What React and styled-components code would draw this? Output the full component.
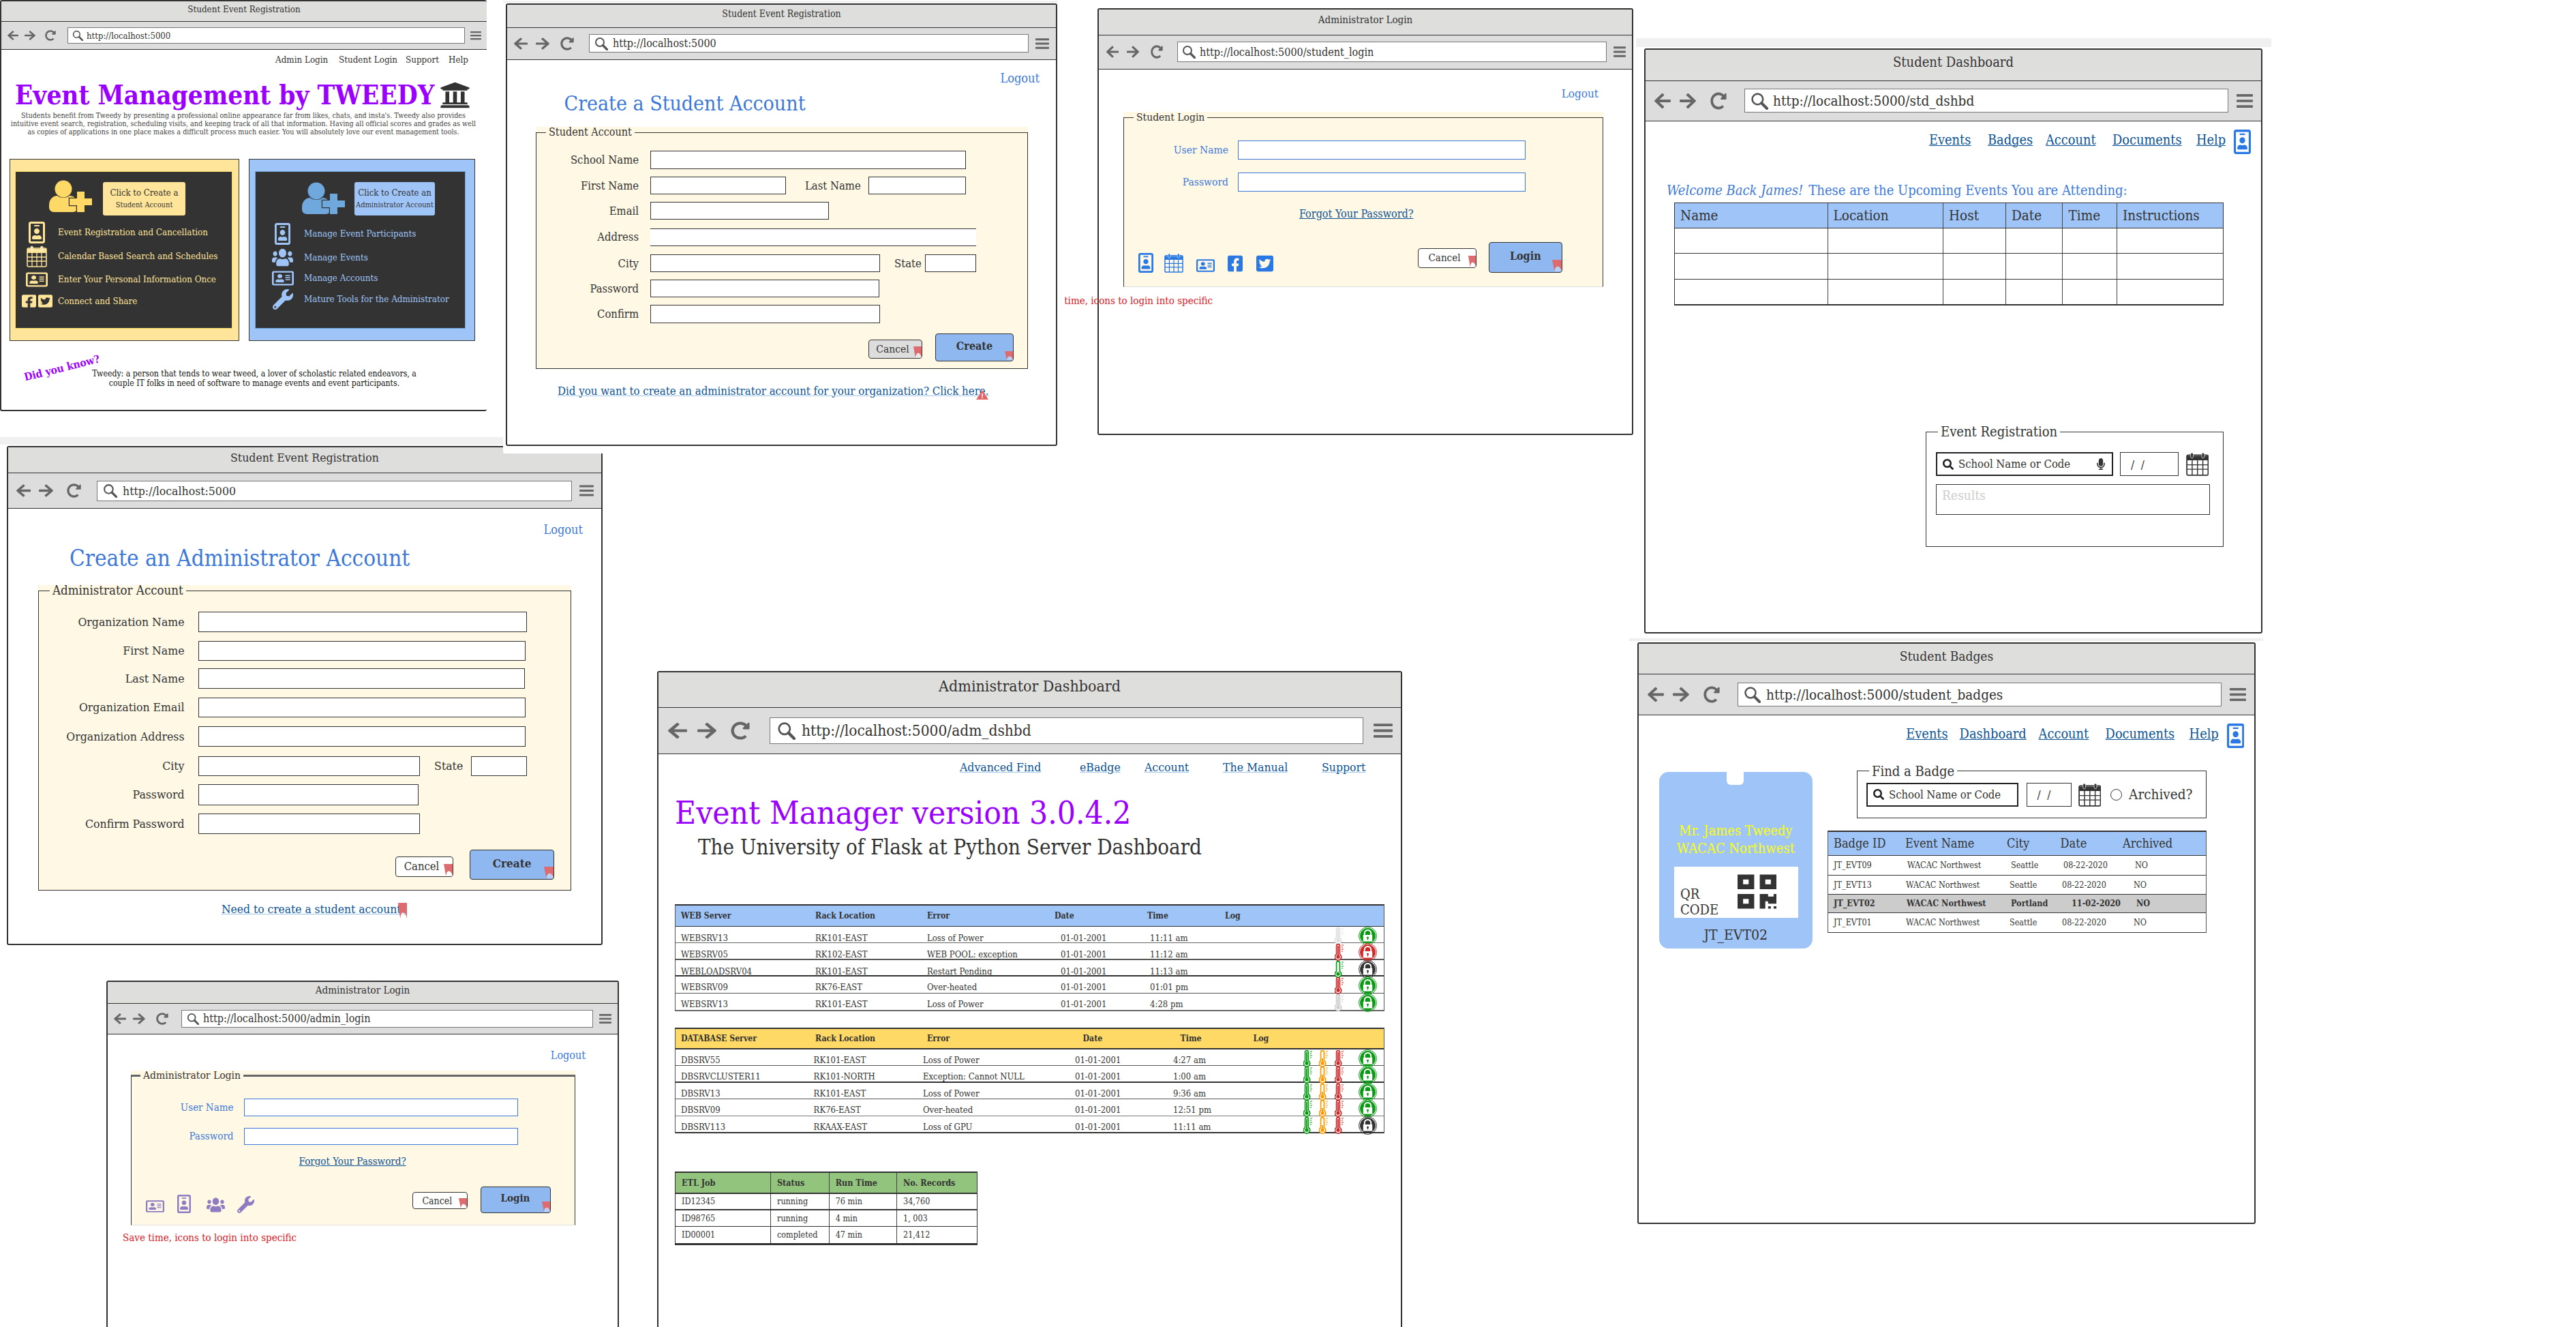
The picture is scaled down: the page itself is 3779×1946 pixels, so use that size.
import React from "react";
import styled, { createGlobalStyle } from "styled-components";
import {
  FaArrowLeft,
  FaArrowRight,
  FaRedoAlt,
  FaBars,
  FaSearch,
  FaUniversity,
  FaRegIdBadge,
  FaRegAddressCard,
  FaFacebookSquare,
  FaTwitterSquare,
  FaUsers,
  FaWrench,
  FaMicrophone,
  FaQrcode,
} from "react-icons/fa";

const SLAB = `"DejaVu Serif Condensed", "DejaVu Serif", "Liberation Serif", serif`;

const BLUE = "#3c78d8";
const LINK = "#0b5394";
const PURPLE = "#9900ff";
const SKY = "#9fc5f8";
const CREAM = "#fff8e5";

const Global = createGlobalStyle`
  html, body { margin: 0; padding: 0; background: #fff; overflow: hidden; }
  * { box-sizing: border-box; }
`;

const Canvas = styled.main`
  position: relative;
  width: 3779px;
  height: 1946px;
  overflow: hidden;
  background: #fff;
  font-family: ${SLAB};
  color: #333;
`;

const Strip = styled.div`
  position: absolute;
  left: ${(p) => p.$x}px;
  top: ${(p) => p.$y}px;
  width: ${(p) => p.$w}px;
  height: ${(p) => p.$h}px;
  background: #f0f0f0;
`;

const Win = styled.section`
  position: absolute;
  left: ${(p) => p.$x}px;
  top: ${(p) => p.$y}px;
  width: ${(p) => p.$w}px;
  height: ${(p) => p.$h}px;
  display: flex;
  flex-direction: column;
  border: 2px solid #333;
  border-right: ${(p) => (p.$open ? "none" : "2px solid #333")};
  border-radius: 3px;
  background: #fff;
  overflow: hidden;
  box-shadow: ${(p) => p.$halo || "none"};
`;

const TitleBar = styled.header`
  flex: none;
  height: ${(p) => p.$h}px;
  display: flex;
  align-items: center;
  justify-content: center;
  background: #dededc;
  border-bottom: 1px solid #333;
  font-size: ${(p) => p.$fs}px;
  color: #333;
  padding-bottom: ${(p) => p.$h * 0.2}px;
`;

const Toolbar = styled.div`
  flex: none;
  height: ${(p) => p.$h}px;
  display: flex;
  align-items: center;
  background: #ddd;
  border-bottom: 1.5px solid #333;
`;

const NavIcons = styled.div`
  flex: none;
  width: ${(p) => p.$w}px;
  display: flex;
  align-items: center;
  padding-left: ${(p) => p.$pad}px;
`;

const Glyph = styled.span`
  flex: none;
  display: block;
  width: ${(p) => p.$w}px;
  height: ${(p) => p.$h}px;
  margin-left: ${(p) => p.$ml || 0}px;
  margin-top: ${(p) => p.$mt || 0}px;
  color: ${(p) => p.$c || "#666"};
  & > svg {
    display: block;
    width: 100%;
    height: 100%;
  }
`;

const UrlBox = styled.div`
  flex: none;
  width: ${(p) => p.$w}px;
  height: ${(p) => p.$h}px;
  display: flex;
  align-items: center;
  background: #fff;
  border: 1.5px solid #777;
  font-size: ${(p) => p.$fs}px;
  color: #333;
  white-space: nowrap;
`;

const UrlIcon = styled.span`
  flex: none;
  width: ${(p) => p.$w}px;
  display: flex;
  justify-content: center;
  color: #555;
`;

const Hamburger = styled.div`
  flex: none;
  margin-left: ${(p) => p.$ml}px;
`;

const Body = styled.div`
  flex: 1;
  min-height: 0;
  padding-top: ${(p) => p.$pt || 0}px;
`;

const NavRow = styled.nav`
  display: flex;
  align-items: center;
  justify-content: flex-end;
  padding-right: ${(p) => p.$pr}px;
`;

const NavLink = styled.a`
  flex: none;
  width: ${(p) => p.$w}px;
  margin-left: ${(p) => p.$ml || 0}px;
  margin-bottom: ${(p) => p.$mb || 0}px;
  font-size: ${(p) => p.$fs}px;
  line-height: 20px;
  white-space: nowrap;
  color: ${(p) => p.$c || LINK};
  text-decoration: ${(p) => (p.$plain ? "none" : "underline")};
  text-decoration-color: ${(p) => p.$under || "currentColor"};
  text-decoration-thickness: 1px;
`;

const Logout = styled.a`
  display: block;
  text-align: right;
  padding-right: ${(p) => p.$pr}px;
  font-size: ${(p) => p.$fs}px;
  line-height: 18px;
  color: ${BLUE};
`;

const Heading = styled.h1`
  margin: ${(p) => p.$mt}px 0 0 ${(p) => p.$ml}px;
  font-size: ${(p) => p.$fs}px;
  line-height: ${(p) => p.$lh}px;
  font-weight: 400;
  color: ${BLUE};
  white-space: nowrap;
`;

const Cream = styled.div`
  margin: ${(p) => p.$mt}px ${(p) => p.$mr}px 0 ${(p) => p.$ml}px;
  background: ${CREAM};
`;

const Field = styled.fieldset`
  margin: 0;
  padding: 0 0 ${(p) => p.$pb || 0}px 0;
  min-width: 0;
  border: 1px solid #333;
  border-top: ${(p) => p.$top || "1.5px solid #333"};
  border-bottom: ${(p) => p.$bottom || "1px solid #333"};
`;

const Legend = styled.legend`
  margin-left: ${(p) => p.$ml}px;
  padding: 0 4px;
  font-size: ${(p) => p.$fs}px;
  line-height: ${(p) => p.$lh}px;
  color: #333;
`;

const FormRow = styled.div`
  display: flex;
  align-items: ${(p) => p.$align || "center"};
  margin-top: ${(p) => p.$mt}px;
`;

const Label = styled.label`
  flex: none;
  width: ${(p) => p.$w}px;
  margin-left: ${(p) => p.$ml || 0}px;
  margin-right: ${(p) => p.$gap}px;
  text-align: right;
  white-space: nowrap;
  font-size: ${(p) => p.$fs}px;
  color: ${(p) => p.$c || "#333"};
`;

const Input = styled.input`
  flex: none;
  display: block;
  width: ${(p) => p.$w}px;
  height: ${(p) => p.$h}px;
  padding: 0;
  background: #fff;
  border: ${(p) => p.$b || "1px solid #333"};
  border-left: ${(p) => p.$sides};
  border-right: ${(p) => p.$sides};
  border-radius: 0;
`;

const Buttons = styled.div`
  display: flex;
  flex: none;
  align-items: flex-start;
  margin-left: auto;
  padding-right: ${(p) => p.$pr}px;
  gap: ${(p) => p.$gap}px;
`;

const Btn = styled.button`
  position: relative;
  flex: none;
  width: ${(p) => p.$w}px;
  height: ${(p) => p.$h}px;
  margin-top: ${(p) => p.$mt || 0}px;
  padding: 0 ${(p) => p.$pr || 0}px ${(p) => p.$pb || 0}px 0;
  border: 1.5px solid #333;
  border-radius: 4px;
  background: ${(p) => p.$bg};
  font-family: ${SLAB};
  font-size: ${(p) => p.$fs}px;
  font-weight: ${(p) => (p.$bold ? 700 : 400)};
  color: #333;
`;

const Marker = styled.svg`
  position: absolute;
  right: ${(p) => p.$r || 0}px;
  bottom: ${(p) => p.$b || 0}px;
  width: ${(p) => p.$w}px;
  height: ${(p) => p.$h}px;
`;

const FootLink = styled.a`
  position: relative;
  display: inline-block;
  margin: ${(p) => p.$mt}px 0 0 ${(p) => p.$ml}px;
  font-size: ${(p) => p.$fs}px;
  line-height: 20px;
  color: ${LINK};
  text-decoration: underline;
  text-decoration-color: #9fc5e8;
  white-space: nowrap;
`;

const Forgot = styled.a`
  display: block;
  margin: ${(p) => p.$mt}px 0 0 ${(p) => p.$ml}px;
  font-size: ${(p) => p.$fs}px;
  line-height: 18px;
  color: ${LINK};
  text-decoration: underline;
`;

const RedNote = styled.p`
  margin: ${(p) => p.$mt}px 0 0 ${(p) => p.$ml}px;
  font-size: 15px;
  line-height: 18px;
  color: #d5222a;
  white-space: nowrap;
`;

const LooseNote = styled(RedNote)`
  position: absolute;
  left: 1524px;
  top: 432px;
  margin: 0;
`;

const IconRow = styled.div`
  display: flex;
  align-items: flex-end;
  padding-left: ${(p) => p.$pl}px;
  align-self: ${(p) => p.$self || "flex-end"};
`;

/* home page */
const HomeTitleRow = styled.div`
  display: flex;
  align-items: center;
  height: 46px;
  margin: 18.5px 0 0 20px;
`;

const HomeTitle = styled.h1`
  flex: none;
  width: 623px;
  margin: 0;
  font-size: ${(p) => p.$fs}px;
  line-height: 46px;
  font-weight: 700;
  color: ${PURPLE};
  white-space: nowrap;
`;

const Blurb = styled.p`
  width: 700px;
  margin: 1px 0 0 5px;
  font-size: 10.7px;
  line-height: 12px;
  text-align: center;
  color: #444;
  white-space: nowrap;
`;

const PanelRow = styled.div`
  display: flex;
  gap: 13.5px;
  margin: 33px 0 0 11.5px;
`;

const Panel = styled.div`
  flex: none;
  width: ${(p) => p.$w}px;
  height: 267px;
  padding: 17px 0 0 ${(p) => p.$pl}px;
  background: ${(p) => p.$bg};
  border: 1px solid #333;
`;

const DarkBox = styled.div`
  width: ${(p) => p.$w}px;
  height: 231px;
  background: #333;
  border: 1px solid ${(p) => p.$edge};
`;

const PanelHead = styled.div`
  display: flex;
  align-items: flex-start;
  padding: ${(p) => p.$pt}px 0 0 ${(p) => p.$pl}px;
  gap: ${(p) => p.$gap}px;
`;

const CallButton = styled.div`
  flex: none;
  width: ${(p) => p.$w}px;
  height: 49px;
  margin-top: ${(p) => p.$mt || 0}px;
  display: flex;
  flex-direction: column;
  align-items: center;
  justify-content: center;
  gap: 5px;
  background: ${(p) => p.$bg};
  border-radius: 3px;
  color: #333;
  white-space: nowrap;
`;

const CallBig = styled.span`
  font-size: 13px;
  line-height: 14px;
`;

const CallSmall = styled.span`
  font-size: 11px;
  line-height: 12px;
`;

const Perk = styled.div`
  display: flex;
  align-items: center;
  height: ${(p) => p.$h}px;
  margin-top: ${(p) => p.$mt}px;
  padding-left: ${(p) => p.$pl || 0}px;
  color: ${(p) => p.$c};
  font-size: 13.3px;
  white-space: nowrap;
`;

const PerkIcon = styled.div`
  flex: none;
  display: flex;
  justify-content: center;
  gap: 3px;
  width: ${(p) => p.$w}px;
  margin-right: ${(p) => p.$gap || 0}px;
`;

const Footnote = styled.div`
  position: relative;
  margin-top: 41px;
`;

const DidYou = styled.span`
  position: absolute;
  left: 32px;
  top: -11px;
  font-size: 15.5px;
  line-height: 20px;
  font-weight: 700;
  color: ${PURPLE};
  transform: rotate(-14deg);
  white-space: nowrap;
`;

const Definition = styled.p`
  width: 490px;
  margin: 0 0 0 126px;
  font-size: 12.2px;
  line-height: 14px;
  text-align: center;
  color: #111;
  white-space: nowrap;
`;

/* tables */
const Table = styled.div`
  width: ${(p) => p.$w}px;
  margin: ${(p) => p.$mt}px 0 0 ${(p) => p.$ml}px;
  border-left: 1px solid #555;
  border-right: 1px solid #555;
  border-top: 2px solid #333;
  font-size: ${(p) => p.$fs}px;
`;

const GridRow = styled.div`
  display: grid;
  grid-template-columns: ${(p) => p.$cols};
  align-items: center;
  height: ${(p) => p.$h}px;
  padding-left: ${(p) => p.$pl || 0}px;
  background: ${(p) => p.$bg || "#fff"};
  border-bottom: ${(p) => p.$bw || 1}px solid ${(p) => p.$bc || "#444"};
  font-weight: ${(p) => (p.$bold ? 700 : 400)};
  font-size: ${(p) => p.$fs || "inherit"};
  white-space: nowrap;
  & > span {
    padding-top: ${(p) => p.$lift || 0}px;
  }
`;

const Status = styled.div`
  display: flex;
  align-items: center;
  justify-content: flex-end;
  height: 100%;
  padding-right: 10px;
  gap: 8px;
`;

const LockSlot = styled.span`
  flex: none;
  width: 27px;
  height: 27px;
  margin-left: 12px;
`;

const Boxed = styled.div`
  display: grid;
  grid-template-columns: ${(p) => p.$cols};
  height: ${(p) => p.$h}px;
  background: ${(p) => p.$bg || "#fff"};
  border-bottom: ${(p) => p.$bw || 1}px solid #333;
  white-space: nowrap;
`;

const BoxedCell = styled.div`
  display: flex;
  align-items: center;
  padding-left: ${(p) => p.$pl}px;
  border-right: ${(p) => (p.$last ? "none" : "1px solid #444")};
  font-size: ${(p) => p.$fs}px;
  font-weight: ${(p) => (p.$bold ? 700 : 400)};
`;

const BoxedTable = styled.div`
  width: ${(p) => p.$w}px;
  margin: ${(p) => p.$mt}px 0 0 ${(p) => p.$ml}px;
  border: 1px solid #333;
  border-top-width: ${(p) => p.$tw || 1}px;
`;

/* dashboards */
const Welcome = styled.p`
  margin: 42px 0 0 31px;
  font-size: 20px;
  line-height: 22px;
  color: ${BLUE};
  white-space: nowrap;
  & > em {
    margin-right: 8px;
  }
`;

const PlainField = styled.fieldset`
  width: ${(p) => p.$w}px;
  height: ${(p) => p.$h}px;
  margin: ${(p) => p.$mt}px 0 0 ${(p) => p.$ml}px;
  padding: 0;
  min-width: 0;
  border: 1px solid #333;
`;

const SearchBox = styled.div`
  flex: none;
  display: flex;
  align-items: center;
  width: ${(p) => p.$w}px;
  height: 35px;
  margin-left: ${(p) => p.$ml || 0}px;
  padding-left: 8px;
  background: #fff;
  border: 2px solid #222;
  font-size: 16.5px;
  color: #333;
  white-space: nowrap;
`;

const SearchText = styled.span`
  flex: 1;
  margin-left: 7px;
`;

const DateBox = styled.div`
  flex: none;
  width: ${(p) => p.$w}px;
  height: 35px;
  margin-left: ${(p) => p.$ml}px;
  display: flex;
  align-items: center;
  padding-left: 15px;
  border: 1px solid #333;
  font-size: 17px;
  white-space: pre;
`;

const Results = styled.div`
  width: 402px;
  height: 45px;
  margin: 12px 0 0 14px;
  padding: 5px 8px;
  border: 1.5px solid #333;
  font-size: 19px;
  line-height: 20px;
  color: #ccc;
`;

const AdminHeading = styled.h1`
  margin: 29px 0 0 24px;
  font-size: 47.5px;
  line-height: 56px;
  font-weight: 400;
  color: ${PURPLE};
  white-space: nowrap;
`;

const AdminSub = styled.h2`
  margin: 3px 0 0 58px;
  font-size: 31px;
  line-height: 38px;
  font-weight: 400;
  color: #333;
  white-space: nowrap;
`;

/* badges */
const BadgeMain = styled.div`
  display: flex;
  align-items: flex-start;
  gap: 22.5px;
  margin: 35px 0 0 30px;
`;

const BadgeCard = styled.div`
  position: relative;
  flex: none;
  width: 224.5px;
  height: 259px;
  padding-top: 73px;
  background: ${SKY};
  border-radius: 14px;
  text-align: center;
  overflow: hidden;
`;

const BadgeHole = styled.span`
  position: absolute;
  left: 99px;
  top: -6px;
  width: 25px;
  height: 25px;
  background: #fff;
  border-radius: 6px;
`;

const BadgeName = styled.div`
  font-size: 20px;
  line-height: 26px;
  color: #ffff00;
  white-space: nowrap;
`;

const QrBox = styled.div`
  display: flex;
  align-items: flex-start;
  width: 182px;
  height: 75px;
  margin: 14px 0 0 22px;
  padding: 8px 32px 0 9px;
  background: #fff;
  text-align: left;
  color: #333;
`;

const QrText = styled.div`
  flex: 1;
  padding-top: 21px;
  font-size: 20px;
  line-height: 23px;
`;

const BadgeId = styled.div`
  margin-top: 13px;
  font-size: 21px;
  line-height: 24px;
  color: #333;
`;

const BadgeSide = styled.div`
  flex: none;
  width: 556px;
  margin-top: -12px;
`;

const FindRow = styled.div`
  display: flex;
  align-items: center;
  margin-top: 6px;
  padding-left: 13px;
`;

const Radio = styled.span`
  flex: none;
  width: 17px;
  height: 17px;
  margin: 0 10px 0 14px;
  border: 1.5px solid #333;
  border-radius: 50%;
`;

const Archived = styled.span`
  font-size: 20.5px;
  white-space: nowrap;
`;

/* drawings */
const MagGlass = ({ size }) => (
  <svg width={size} height={size} viewBox="0 0 20 20" fill="none">
    <circle cx="8" cy="8" r="6" stroke="currentColor" strokeWidth="2" />
    <path d="M12.5 12.5 L18.5 18.5" stroke="currentColor" strokeWidth="3.2" strokeLinecap="round" />
  </svg>
);

const UserPlus = ({ color }) => (
  <svg viewBox="0 0 63 47" preserveAspectRatio="none">
    <circle cx="21" cy="13" r="12.5" fill={color} />
    <path d="M0 37 C0 27 7 23 12 23 C16 27 26 27 30 23 C36 23 42 27 42 37 V40 C42 44 39 47 35 47 H7 C3 47 0 44 0 40 Z" fill={color} />
    <path d="M41 17 H52 V27 H63 V37 H52 V47 H41 V37 H30 V27 H41 Z" fill={color} stroke="#333" strokeWidth="2.5" paintOrder="stroke" />
  </svg>
);

const Calendar = () => (
  <svg viewBox="0 0 30 32" preserveAspectRatio="none" fill="none" stroke="currentColor">
    <rect x="1" y="4" width="28" height="27" rx="2" strokeWidth="1.6" />
    <path d="M1 5 H29 V11 H1 Z" fill="currentColor" stroke="none" />
    <path d="M1 17 H29 M1 23 H29 M8 11 V31 M15 11 V31 M22 11 V31" strokeWidth="1.3" />
    <rect x="6" y="1" width="3.4" height="7" rx="1.7" fill="currentColor" stroke="#fff" strokeWidth="0.6" />
    <rect x="20.6" y="1" width="3.4" height="7" rx="1.7" fill="currentColor" stroke="#fff" strokeWidth="0.6" />
  </svg>
);

const Thermo = ({ color, level }) => (
  <svg width="15" height="25" viewBox="0 0 15 25" fill="none">
    <path d="M2.6 3 a2.4 2.4 0 0 1 4.8 0 V15.4 a4.7 4.7 0 1 1 -4.8 0 Z" stroke={color} strokeWidth="1.7" fill="#fff" />
    <circle cx="5" cy="19.2" r="2.6" fill={color} />
    <rect x="4.1" y={level} width="1.8" height={19 - level} fill={color} />
    <path d="M9.8 2 H13 M9.8 5 H12 M9.8 8 H13 M9.8 11 H12" stroke={color} strokeWidth="1.2" />
  </svg>
);

const Lock = ({ color }) => (
  <svg viewBox="0 0 27 27" width="27" height="27">
    <circle cx="13.5" cy="13.5" r="13" fill="none" stroke={color} strokeWidth="1" />
    <circle cx="13.5" cy="13.5" r="11.4" fill={color} />
    <path d="M8.8 12 V9.6 a4.7 4.7 0 0 1 9.4 0 V12" fill="none" stroke="#fff" strokeWidth="2" />
    <rect x="6.8" y="12" width="13.4" height="9.6" fill="#fff" />
    <circle cx="13.5" cy="16" r="1.5" fill={color} />
    <rect x="12.8" y="16" width="1.4" height="3.4" fill={color} />
  </svg>
);

const Ribbon = (props) => (
  <Marker {...props} viewBox="0 0 12 16" preserveAspectRatio="none">
    <path d="M0 0 H12 V16 C11 10 7 8 5 10 C4 11 3 14 3 16 Z" fill="#dd6b6f" />
    <path d="M3 16 C3 14 4 11 5 10 C7 8 11 10 12 16 Z" fill="#ffffff" opacity="0.35" />
  </Marker>
);

const WarnTri = (props) => (
  <Marker {...props} viewBox="0 0 18 14" preserveAspectRatio="none">
    <path d="M9 0 L18 14 H0 Z" fill="#e06666" />
    <rect x="8.2" y="5" width="1.6" height="4.6" fill="#fff" />
    <rect x="8.2" y="10.6" width="1.6" height="1.6" fill="#fff" />
  </Marker>
);

const Browser = ({ cfg, title, url, children, open, halo }) => (
  <Win $x={cfg.x} $y={cfg.y} $w={cfg.w} $h={cfg.h} $open={open} $halo={halo}>
    <TitleBar $h={cfg.tH - 2} $fs={cfg.tFs}>
      {title}
    </TitleBar>
    <Toolbar $h={cfg.bH}>
      <NavIcons $w={cfg.uL - 2} $pad={cfg.i0 - 2}>
        <Glyph $w={cfg.iW} $h={cfg.iH}>
          <FaArrowLeft preserveAspectRatio="none" />
        </Glyph>
        <Glyph $w={cfg.iW} $h={cfg.iH} $ml={cfg.i1 - cfg.i0 - cfg.iW}>
          <FaArrowRight preserveAspectRatio="none" />
        </Glyph>
        <Glyph $w={cfg.iW} $h={cfg.iH} $ml={cfg.i2 - cfg.i1 - cfg.iW}>
          <FaRedoAlt preserveAspectRatio="none" />
        </Glyph>
      </NavIcons>
      <UrlBox $w={cfg.uR - cfg.uL} $h={cfg.uH} $fs={cfg.uFs}>
        <UrlIcon $w={cfg.uPad}>
          <MagGlass size={cfg.iH} />
        </UrlIcon>
        {url}
      </UrlBox>
      <Hamburger $ml={cfg.hGap}>
        <Glyph $w={cfg.iW} $h={cfg.iH}>
          <FaBars preserveAspectRatio="none" />
        </Glyph>
      </Hamburger>
    </Toolbar>
    {children}
  </Win>
);

const HOME = { x: 0, y: 0, w: 714, h: 603, tH: 32, bH: 41, uL: 99, uR: 682, uH: 24, i0: 11, i1: 36, i2: 66, iW: 16, iH: 16, hGap: 8, uFs: 13, uPad: 27, tFs: 13.3 };
const NEW_STUDENT = { x: 742, y: 5, w: 809, h: 649, tH: 36, bH: 46.5, uL: 122, uR: 767, uH: 27, i0: 12, i1: 44, i2: 80, iW: 20, iH: 20, hGap: 10, uFs: 16, uPad: 34, tFs: 14 };
const STUDENT_LOGIN = { x: 1610, y: 12, w: 786, h: 626, tH: 40, bH: 49.5, uL: 117, uR: 746.5, uH: 30, i0: 13, i1: 43, i2: 78, iW: 18, iH: 20, hGap: 10.5, uFs: 16, uPad: 32, tFs: 15 };
const STUDENT_DASH = { x: 2412, y: 71, w: 907, h: 858, tH: 47.6, bH: 59.4, uL: 147, uR: 856.5, uH: 35, i0: 15, i1: 52, i2: 97, iW: 24, iH: 26, hGap: 12.5, uFs: 20.5, uPad: 41, tFs: 20 };
const NEW_ADMIN = { x: 10, y: 654, w: 874, h: 732, tH: 40, bH: 52, uL: 132, uR: 829, uH: 30, i0: 14, i1: 47, i2: 88, iW: 21, iH: 21, hGap: 11, uFs: 17.5, uPad: 37, tFs: 17.5 };
const ADMIN_LOGIN = { x: 156, y: 1438, w: 752, h: 560, tH: 34, bH: 44.6, uL: 110, uR: 714, uH: 26, i0: 11, i1: 39, i2: 72.6, iW: 18, iH: 18, hGap: 9, uFs: 16, uPad: 31, tFs: 15 };
const ADMIN_DASH = { x: 964, y: 984, w: 1093, h: 1010, tH: 54, bH: 67.5, uL: 165, uR: 1036, uH: 39, i0: 16, i1: 59, i2: 108, iW: 28, iH: 27, hGap: 15, uFs: 22.5, uPad: 46, tFs: 23 };
const BADGES = { x: 2402, y: 942, w: 907, h: 853, tH: 47, bH: 60.4, uL: 147, uR: 856.5, uH: 35, i0: 15, i1: 52, i2: 97, iW: 24, iH: 25, hGap: 12.5, uFs: 20.5, uPad: 41, tFs: 19 };

const WEB_ROWS = [
  { h: 24, bw: 1, bc: "#666", c: ["WEBSRV13", "RK101-EAST", "Loss of Power", "01-01-2001", "11:11 am"], t: ["#ddd", 3], lock: "#0a9a14" },
  { h: 25, bw: 2, bc: "#555", c: ["WEBSRV05", "RK102-EAST", "WEB POOL: exception", "01-01-2001", "11:12 am"], t: ["#cc2a2a", 3], lock: "#d22a2a" },
  { h: 23.5, bw: 2, bc: "#333", c: ["WEBLOADSRV04", "RK101-EAST", "Restart Pending", "01-01-2001", "11:13 am"], t: ["#0a9a14", 17], lock: "#333" },
  { h: 25, bw: 1, bc: "#555", c: ["WEBSRV09", "RK76-EAST", "Over-heated", "01-01-2001", "01:01 pm"], t: ["#cc2a2a", 3], lock: "#0a9a14" },
  { h: 26, bw: 2, bc: "#666", c: ["WEBSRV13", "RK101-EAST", "Loss of Power", "01-01-2001", "4:28 pm"], t: ["#ccc", 3], lock: "#0a9a14" },
];

const DB_ROWS = [
  { h: 24, bw: 1, bc: "#555", c: ["DBSRV55", "RK101-EAST", "Loss of Power", "01-01-2001", "4:27 am"], lock: "#0a9a14" },
  { h: 25, bw: 2, bc: "#333", c: ["DBSRVCLUSTER11", "RK101-NORTH", "Exception: Cannot NULL", "01-01-2001", "1:00 am"], lock: "#0a9a14" },
  { h: 24, bw: 1, bc: "#555", c: ["DBSRV13", "RK101-EAST", "Loss of Power", "01-01-2001", "9:36 am"], lock: "#0a9a14" },
  { h: 25, bw: 1, bc: "#777", c: ["DBSRV09", "RK76-EAST", "Over-heated", "01-01-2001", "12:51 pm"], lock: "#0a9a14" },
  { h: 25, bw: 2, bc: "#333", c: ["DBSRV113", "RKAAX-EAST", "Loss of GPU", "01-01-2001", "11:11 am"], lock: "#333" },
];

const ETL_COLS = "140px 85.7px 99.3px 1fr";
const ETL_ROWS = [
  ["ID12345", "running", "76  min", "34,760"],
  ["ID98765", "running", "4 min", "1, 003"],
  ["ID00001", "completed", "47 min", "21,412"],
];

const EVENT_COLS = "224.6px 169.4px 92px 83.5px 79.5px 1fr";

const BADGE_ROWS = [
  { h: 29, cols: "108px 152px 77px 105px 1fr", c: ["JT_EVT09", "WACAC Northwest", "Seattle", "08-22-2020", "NO"] },
  { h: 28, cols: "106px 152px 77px 105px 1fr", c: ["JT_EVT13", "WACAC Northwest", "Seattle", "08-22-2020", "NO"] },
  { h: 27, cols: "107px 153px 89px 95px 1fr", c: ["JT_EVT02", "WACAC Northwest", "Portland", "11-02-2020", "NO"], bold: true, bg: "#ccc" },
  { h: 29, cols: "106px 152px 77px 105px 1fr", c: ["JT_EVT01", "WACAC Northwest", "Seattle", "08-22-2020", "NO"] },
];

const Home = () => (
  <Browser cfg={HOME} title="Student Event Registration" url="http://localhost:5000" open>
    <Body $pt={5}>
      <NavRow $pr={30}>
        <NavLink $plain $c="#333" $fs={13.3} $w={74}>Admin Login</NavLink>
        <NavLink $plain $c="#333" $fs={13.3} $w={79} $ml={19}>Student Login</NavLink>
        <NavLink $plain $c="#333" $fs={13.3} $w={45} $ml={19}>Support</NavLink>
        <NavLink $plain $c="#333" $fs={13.3} $w={26} $ml={18}>Help</NavLink>
      </NavRow>
      <HomeTitleRow>
        <HomeTitle $fs={38.4}>Event Management by TWEEDY</HomeTitle>
        <Glyph $w={45} $h={43} $c="#333">
          <FaUniversity preserveAspectRatio="none" />
        </Glyph>
      </HomeTitleRow>
      <Blurb>
        Students benefit from Tweedy by presenting a professional online appearance far from likes, chats, and insta's. Tweedy also provides
        <br />
        intuitive event search, registration, scheduling visits, and keeping track of all that information. Having all official scores and grades as well
        <br />
        as copies of applications in one place makes a difficult process much easier. You will absolutely love our event management tools.
      </Blurb>
      <PanelRow>
        <Panel $w={337.5} $bg="#ffe599" $pl={7.5}>
          <DarkBox $w={319} $edge="#ffd966">
            <PanelHead $pt={12} $pl={49} $gap={16}>
              <Glyph $w={63} $h={47} $c="#ffd966">
                <UserPlus color="#ffd966" />
              </Glyph>
              <CallButton $w={121} $mt={3} $bg="#ffe599">
                <CallBig>Click to Create a</CallBig>
                <CallSmall>Student Account</CallSmall>
              </CallButton>
            </PanelHead>
            <Perk $h={32} $mt={9} $c="#ffe599">
              <PerkIcon $w={62}><Glyph $w={24} $h={32} $c="#ffe599"><FaRegIdBadge preserveAspectRatio="none" /></Glyph></PerkIcon>
              Event Registration and Cancellation
            </Perk>
            <Perk $h={32} $mt={3} $c="#ffe599">
              <PerkIcon $w={62}><Glyph $w={30} $h={32} $c="#ffe599"><Calendar /></Glyph></PerkIcon>
              Calendar Based Search and Schedules
            </Perk>
            <Perk $h={24} $mt={6} $c="#ffe599">
              <PerkIcon $w={62}><Glyph $w={32} $h={24} $c="#ffe599"><FaRegAddressCard preserveAspectRatio="none" /></Glyph></PerkIcon>
              Enter Your Personal Information Once
            </Perk>
            <Perk $h={21} $mt={9} $c="#ffe599">
              <PerkIcon $w={62}>
                <Glyph $w={21} $h={21} $c="#ffe599"><FaFacebookSquare preserveAspectRatio="none" /></Glyph>
                <Glyph $w={21} $h={21} $c="#ffe599"><FaTwitterSquare preserveAspectRatio="none" /></Glyph>
              </PerkIcon>
              Connect and Share
            </Perk>
          </DarkBox>
        </Panel>
        <Panel $w={332.5} $bg={SKY} $pl={8.5}>
          <DarkBox $w={309} $edge="#6fa8dc">
            <PanelHead $pt={15} $pl={68} $gap={14}>
              <Glyph $w={63} $h={47} $c="#6fa8dc">
                <UserPlus color="#6fa8dc" />
              </Glyph>
              <CallButton $w={118} $bg={SKY}>
                <CallBig>Click to Create an</CallBig>
                <CallSmall>Administrator Account</CallSmall>
              </CallButton>
            </PanelHead>
            <Perk $h={32} $mt={11} $pl={10} $c={SKY}>
              <PerkIcon $w={59} $gap={2}><Glyph $w={23} $h={32} $c={SKY}><FaRegIdBadge preserveAspectRatio="none" /></Glyph></PerkIcon>
              Manage Event Participants
            </Perk>
            <Perk $h={29} $mt={4} $pl={10} $c={SKY}>
              <PerkIcon $w={59} $gap={2}><Glyph $w={31} $h={29} $c={SKY}><FaUsers preserveAspectRatio="none" /></Glyph></PerkIcon>
              Manage Events
            </Perk>
            <Perk $h={24} $mt={4} $pl={10} $c={SKY}>
              <PerkIcon $w={59} $gap={2}><Glyph $w={32} $h={24} $c={SKY}><FaRegAddressCard preserveAspectRatio="none" /></Glyph></PerkIcon>
              Manage Accounts
            </Perk>
            <Perk $h={30} $mt={4} $pl={10} $c={SKY}>
              <PerkIcon $w={59} $gap={2}><Glyph $w={30} $h={30} $c={SKY}><FaWrench preserveAspectRatio="none" /></Glyph></PerkIcon>
              Mature Tools for the Administrator
            </Perk>
          </DarkBox>
        </Panel>
      </PanelRow>
      <Footnote>
        <DidYou>Did you know?</DidYou>
        <Definition>
          Tweedy: a person that tends to wear tweed, a lover of scholastic related endeavors, a
          <br />
          couple IT folks in need of software to manage events and event participants.
        </Definition>
      </Footnote>
    </Body>
  </Browser>
);

const NewStudent = () => (
  <Browser
    cfg={NEW_STUDENT}
    title="Student Event Registration"
    url="http://localhost:5000"
    halo="11px 11px 0 0 #fff, -4px 11px 0 0 #fff"
  >
    <Body $pt={18}>
      <Logout $pr={24} $fs={18}>Logout</Logout>
      <Heading $mt={11} $ml={83.5} $fs={30} $lh={34}>Create a Student Account</Heading>
      <Cream $mt={17.5} $mr={41} $ml={42}>
        <Field $pb={10}>
          <Legend $ml={14} $fs={16} $lh={16}>Student Account</Legend>
          <FormRow $mt={19}>
            <Label $w={150} $gap={17} $fs={16.5}>School Name</Label>
            <Input $w={463} $h={26.5} />
          </FormRow>
          <FormRow $mt={11.5}>
            <Label $w={150} $gap={17} $fs={16.5}>First Name</Label>
            <Input $w={199} $h={26} />
            <Label $w={81} $ml={28} $gap={12} $fs={16.5}>Last Name</Label>
            <Input $w={143} $h={26} />
          </FormRow>
          <FormRow $mt={11}>
            <Label $w={150} $gap={17} $fs={16.5}>Email</Label>
            <Input $w={262} $h={26} />
          </FormRow>
          <FormRow $mt={12.5}>
            <Label $w={150} $gap={17} $fs={16.5}>Address</Label>
            <Input $w={478} $h={26.5} $sides="none" />
          </FormRow>
          <FormRow $mt={12}>
            <Label $w={150} $gap={17} $fs={16.5}>City</Label>
            <Input $w={337} $h={26} />
            <Label $w={38} $ml={21} $gap={7} $fs={16.5}>State</Label>
            <Input $w={75} $h={26} />
          </FormRow>
          <FormRow $mt={11}>
            <Label $w={150} $gap={17} $fs={16.5}>Password</Label>
            <Input $w={336} $h={26} />
          </FormRow>
          <FormRow $mt={11}>
            <Label $w={150} $gap={17} $fs={16.5}>Confirm</Label>
            <Input $w={337} $h={27} />
          </FormRow>
          <FormRow $mt={15} $align="flex-start">
            <Buttons $pr={20} $gap={19}>
              <Btn $w={79} $h={28} $mt={9} $bg="#ddd" $fs={15.5} $pr={8}>
                Cancel
                <Ribbon $w={12} $h={17} />
              </Btn>
              <Btn $w={115} $h={40.5} $bg="#8fb8f0" $bold $fs={16} $pb={4}>
                Create
                <Ribbon $w={12} $h={13} $b={1} />
              </Btn>
            </Buttons>
          </FormRow>
        </Field>
      </Cream>
      <FootLink $mt={22} $ml={74} $fs={16.7}>
        Did you want to create an administrator account for your organization? Click here.
        <WarnTri $w={18} $h={14} $b={-3} />
      </FootLink>
    </Body>
  </Browser>
);

const StudentLogin = () => (
  <Browser cfg={STUDENT_LOGIN} title="Administrator Login" url="http://localhost:5000/student_login">
    <Body $pt={26.5}>
      <Logout $pr={49} $fs={17}>Logout</Logout>
      <Cream $mt={18} $mr={42} $ml={36}>
        <Field $pb={20} $top="1px solid #333" $bottom="1px solid #ddd">
          <Legend $ml={14} $fs={15.5} $lh={17}>Student Login</Legend>
          <FormRow $mt={25}>
            <Label $w={153} $gap={14} $fs={15.5} $c={BLUE}>User Name</Label>
            <Input $w={422} $h={28} $b={`1.5px solid ${BLUE}`} />
          </FormRow>
          <FormRow $mt={18.5}>
            <Label $w={153} $gap={14} $fs={15.5} $c={BLUE}>Password</Label>
            <Input $w={422} $h={28.5} $b={`1.5px solid ${BLUE}`} />
          </FormRow>
          <Forgot $mt={23.5} $ml={257} $fs={16}>Forgot Your Password?</Forgot>
          <FormRow $mt={32.5} $align="stretch">
            <IconRow $pl={21}>
              <Glyph $w={22} $h={29} $c="#2a78e4"><FaRegIdBadge preserveAspectRatio="none" /></Glyph>
              <Glyph $w={28} $h={29} $ml={16} $c="#2a78e4"><Calendar /></Glyph>
              <Glyph $w={27} $h={21} $ml={19} $mt={8} $c="#2a78e4"><FaRegAddressCard preserveAspectRatio="none" /></Glyph>
              <Glyph $w={22} $h={27} $ml={19} $c="#2a78e4"><FaFacebookSquare preserveAspectRatio="none" /></Glyph>
              <Glyph $w={25} $h={27} $ml={20} $c="#2a78e4"><FaTwitterSquare preserveAspectRatio="none" /></Glyph>
            </IconRow>
            <Buttons $pr={59} $gap={17.5}>
              <Btn $w={86} $h={28.5} $mt={9} $bg="#fff" $fs={15} $pr={8}>
                Cancel
                <Ribbon $w={11} $h={17} />
              </Btn>
              <Btn $w={108.5} $h={45} $bg="#8fb8f0" $fs={16} $bold $pb={4}>
                Login
                <Ribbon $w={14} $h={17} $b={1} />
              </Btn>
            </Buttons>
          </FormRow>
        </Field>
      </Cream>
    </Body>
  </Browser>
);

const StudentDash = () => (
  <Browser cfg={STUDENT_DASH} title="Student Dashboard" url="http://localhost:5000/std_dshbd">
    <Body $pt={12}>
      <NavRow $pr={15}>
        <NavLink $fs={19.8} $mb={4} $w={61.5}>Events</NavLink>
        <NavLink $fs={19.8} $mb={4} $w={66} $ml={24.5}>Badges</NavLink>
        <NavLink $fs={19.8} $mb={4} $w={76} $ml={19}>Account</NavLink>
        <NavLink $fs={19.8} $mb={4} $w={104} $ml={22}>Documents</NavLink>
        <NavLink $fs={19.8} $mb={4} $w={43} $ml={19}>Help</NavLink>
        <Glyph $w={25} $h={36} $ml={12} $c="#2a78e4"><FaRegIdBadge preserveAspectRatio="none" /></Glyph>
      </NavRow>
      <Welcome>
        <em>Welcome Back James!</em>These are the Upcoming Events You are Attending:
      </Welcome>
      <BoxedTable $w={806} $mt={7} $ml={42}>
        <Boxed $cols={EVENT_COLS} $h={37} $bg={SKY}>
          {["Name", "Location", "Host", "Date", "Time", "Instructions"].map((t, i) => (
            <BoxedCell key={t} $pl={8} $fs={20.5} $last={i === 5}>{t}</BoxedCell>
          ))}
        </Boxed>
        {[0, 1, 2].map((r) => (
          <Boxed key={r} $cols={EVENT_COLS} $h={37.5}>
            {[0, 1, 2, 3, 4, 5].map((c) => (
              <BoxedCell key={c} $pl={8} $last={c === 5} />
            ))}
          </Boxed>
        ))}
      </BoxedTable>
      <PlainField $w={437} $h={180} $mt={174} $ml={411}>
        <Legend $ml={17} $fs={20} $lh={22}>Event Registration</Legend>
        <FormRow $mt={19}>
          <SearchBox $w={260} $ml={14}>
            <Glyph $w={16} $h={16} $c="#222"><FaSearch /></Glyph>
            <SearchText>School Name or Code</SearchText>
            <Glyph $w={12} $h={17} $c="#333"><FaMicrophone /></Glyph>
            <Glyph $w={10} $h={1} />
          </SearchBox>
          <DateBox $w={85.5} $ml={10}>/  /</DateBox>
          <Glyph $w={33.5} $h={35} $ml={11} $c="#333"><Calendar /></Glyph>
        </FormRow>
        <Results>Results</Results>
      </PlainField>
    </Body>
  </Browser>
);

const NewAdmin = () => (
  <Browser cfg={NEW_ADMIN} title="Student Event Registration" url="http://localhost:5000">
    <Body $pt={22}>
      <Logout $pr={27} $fs={18}>Logout</Logout>
      <Heading $mt={14} $ml={90} $fs={33} $lh={38}>Create an Administrator Account</Heading>
      <Cream $mt={20} $mr={44.5} $ml={44}>
        <Field $pb={15} $top="1px solid #333">
          <Legend $ml={16} $fs={18.5} $lh={16}>Administrator Account</Legend>
          <FormRow $mt={23}>
            <Label $w={213.5} $gap={20} $fs={17.5}>Organization Name</Label>
            <Input $w={482.5} $h={29.5} $b="1.5px solid #333" />
          </FormRow>
          <FormRow $mt={13}>
            <Label $w={213.5} $gap={20} $fs={17.5}>First Name</Label>
            <Input $w={480.5} $h={29.5} />
          </FormRow>
          <FormRow $mt={11}>
            <Label $w={213.5} $gap={20} $fs={17.5}>Last Name</Label>
            <Input $w={479.5} $h={30} />
          </FormRow>
          <FormRow $mt={12.5}>
            <Label $w={213.5} $gap={20} $fs={17.5}>Organization Email</Label>
            <Input $w={480.5} $h={29} />
          </FormRow>
          <FormRow $mt={13.5}>
            <Label $w={213.5} $gap={20} $fs={17.5}>Organization  Address</Label>
            <Input $w={480.5} $h={30} />
          </FormRow>
          <FormRow $mt={13.5}>
            <Label $w={213.5} $gap={20} $fs={17.5}>City</Label>
            <Input $w={325} $h={29.5} />
            <Label $w={40} $ml={21.6} $gap={13.6} $fs={17.5}>State</Label>
            <Input $w={82.4} $h={29.5} $b="1.5px solid #333" />
          </FormRow>
          <FormRow $mt={12}>
            <Label $w={213.5} $gap={20} $fs={17.5}>Password</Label>
            <Input $w={323} $h={30.5} />
          </FormRow>
          <FormRow $mt={12.5}>
            <Label $w={213.5} $gap={20} $fs={17.5}>Confirm Password</Label>
            <Input $w={325} $h={29.5} />
          </FormRow>
          <FormRow $mt={23} $align="flex-start">
            <Buttons $pr={23.5} $gap={24.4}>
              <Btn $w={85} $h={30} $mt={10} $bg="#fff" $fs={16.5} $pr={8}>
                Cancel
                <Ribbon $w={13} $h={18} />
              </Btn>
              <Btn $w={123.6} $h={44.6} $bg="#8fb8f0" $bold $fs={17} $pb={4}>
                Create
                <Ribbon $w={14} $h={17} $b={1} />
              </Btn>
            </Buttons>
          </FormRow>
        </Field>
      </Cream>
      <FootLink $mt={17} $ml={313} $fs={17.3}>
        Need to create a student account?
        <Ribbon $w={13} $h={24} $b={-5} $r={0} />
      </FootLink>
    </Body>
  </Browser>
);

const AdminLogin = () => (
  <Browser cfg={ADMIN_LOGIN} title="Administrator Login" url="http://localhost:5000/admin_login">
    <Body $pt={22}>
      <Logout $pr={47} $fs={16}>Logout</Logout>
      <Cream $mt={13.5} $mr={62.5} $ml={34}>
        <Field $pb={17.5} $top="3px solid #666" $bottom="1px solid #ddd">
          <Legend $ml={13} $fs={15.5} $lh={14}>Administrator Login</Legend>
          <FormRow $mt={27}>
            <Label $w={149.5} $gap={15.5} $fs={15} $c={BLUE}>User Name</Label>
            <Input $w={402.4} $h={26} $b={`1px solid ${BLUE}`} />
          </FormRow>
          <FormRow $mt={16.6}>
            <Label $w={149.5} $gap={15.5} $fs={15} $c={BLUE}>Password</Label>
            <Input $w={402.4} $h={25} $b={`1px solid ${BLUE}`} />
          </FormRow>
          <Forgot $mt={15} $ml={245.6} $fs={15}>Forgot Your Password?</Forgot>
          <FormRow $mt={28.5} $align="stretch">
            <IconRow $pl={21}>
              <Glyph $w={27} $h={20} $c="#8e7cc3"><FaRegAddressCard preserveAspectRatio="none" /></Glyph>
              <Glyph $w={20} $h={27} $ml={19} $c="#8e7cc3"><FaRegIdBadge preserveAspectRatio="none" /></Glyph>
              <Glyph $w={27} $h={24} $ml={23} $c="#8e7cc3"><FaUsers preserveAspectRatio="none" /></Glyph>
              <Glyph $w={25} $h={25} $ml={18} $c="#8e7cc3"><FaWrench preserveAspectRatio="none" /></Glyph>
            </IconRow>
            <Buttons $pr={35} $gap={18.4}>
              <Btn $w={81.6} $h={25.7} $mt={7.5} $bg="#fff" $fs={14} $pr={8}>
                Cancel
                <Ribbon $w={12} $h={15} />
              </Btn>
              <Btn $w={103} $h={38.5} $bg="#8fb8f0" $bold $fs={15} $pb={5}>
                Login
                <Ribbon $w={12} $h={15} $b={1} />
              </Btn>
            </Buttons>
          </FormRow>
        </Field>
      </Cream>
      <RedNote $mt={8.5} $ml={22}>Save time, icons to login into specific</RedNote>
    </Body>
  </Browser>
);

const AdminDash = () => (
  <Browser cfg={ADMIN_DASH} title="Administrator Dashboard" url="http://localhost:5000/adm_dshbd">
    <Body $pt={9.5}>
      <NavRow $pr={54}>
        <NavLink $fs={17.5} $w={121} $under="#9fc5e8">Advanced Find</NavLink>
        <NavLink $fs={17.5} $w={57} $ml={55} $under="#9fc5e8">eBadge</NavLink>
        <NavLink $fs={17.5} $w={67} $ml={38} $under="#9fc5e8">Account</NavLink>
        <NavLink $fs={17.5} $w={97} $ml={48} $under="#9fc5e8">The Manual</NavLink>
        <NavLink $fs={17.5} $w={62} $ml={48} $under="#9fc5e8">Support</NavLink>
      </NavRow>
      <AdminHeading>Event Manager version 3.0.4.2</AdminHeading>
      <AdminSub>The University of Flask at Python Server Dashboard</AdminSub>

      <Table $w={1041.4} $mt={65} $ml={24} $fs={13}>
        <GridRow $cols="197px 164px 187px 136px 114px 1fr" $pl={8} $h={31} $bg={SKY} $bw={1} $bc="#333" $bold $fs="12.2px">
          {["WEB Server", "Rack Location", "Error", "Date", "Time", "Log"].map((t) => (
            <span key={t}>{t}</span>
          ))}
        </GridRow>
        {WEB_ROWS.map((r, i) => (
          <GridRow key={i} $cols="197px 164px 196px 131px 100px 1fr" $pl={8} $h={r.h} $bw={r.bw} $bc={r.bc} $lift={5}>
            {r.c.map((t, j) => (
              <span key={j}>{t}</span>
            ))}
            <Status>
              <Thermo color={r.t[0]} level={r.t[1]} />
              <LockSlot><Lock color={r.lock} /></LockSlot>
            </Status>
          </GridRow>
        ))}
      </Table>

      <Table $w={1041.4} $mt={24} $ml={24} $fs={13}>
        <GridRow $cols="197px 164px 228.6px 143px 107px 1fr" $pl={8} $h={30} $bg="#ffd966" $bw={2} $bc="#333" $bold $fs="12.2px">
          {["DATABASE Server", "Rack Location", "Error", "Date", "Time", "Log"].map((t) => (
            <span key={t}>{t}</span>
          ))}
        </GridRow>
        {DB_ROWS.map((r, i) => (
          <GridRow key={i} $cols="194.6px 160.4px 223px 144px 80px 1fr" $pl={8} $h={r.h} $bw={r.bw} $bc={r.bc} $lift={5}>
            {r.c.map((t, j) => (
              <span key={j}>{t}</span>
            ))}
            <Status>
              <Thermo color="#0a9a14" level={3} />
              <Thermo color="#ff9900" level={12} />
              <Thermo color="#cc2a2a" level={3} />
              <LockSlot><Lock color={r.lock} /></LockSlot>
            </Status>
          </GridRow>
        ))}
      </Table>

      <BoxedTable $w={443.6} $mt={56} $ml={24} $tw={2}>
        <Boxed $cols={ETL_COLS} $h={31} $bg="#93c47d" $bw={2}>
          {["ETL Job", "Status", "Run Time", "No. Records"].map((t, i) => (
            <BoxedCell key={t} $pl={9} $fs={12.5} $bold $last={i === 3}>{t}</BoxedCell>
          ))}
        </Boxed>
        {ETL_ROWS.map((r, i) => (
          <Boxed key={i} $cols={ETL_COLS} $h={i === 2 ? 26 : 24} $bw={i === 1 ? 1 : 2}>
            {r.map((t, j) => (
              <BoxedCell key={j} $pl={9} $fs={12.5} $last={j === 3}>{t}</BoxedCell>
            ))}
          </Boxed>
        ))}
      </BoxedTable>
    </Body>
  </Browser>
);

const Badges = () => (
  <Browser cfg={BADGES} title="Student Badges" url="http://localhost:5000/student_badges">
    <Body $pt={11.6}>
      <NavRow $pr={15}>
        <NavLink $fs={19.8} $mb={4} $w={63.3}>Events</NavLink>
        <NavLink $fs={19.8} $mb={4} $w={98} $ml={15}>Dashboard</NavLink>
        <NavLink $fs={19.8} $mb={4} $w={76} $ml={18}>Account</NavLink>
        <NavLink $fs={19.8} $mb={4} $w={104} $ml={22}>Documents</NavLink>
        <NavLink $fs={19.8} $mb={4} $w={43} $ml={19}>Help</NavLink>
        <Glyph $w={25.4} $h={36} $ml={12} $c="#2a78e4"><FaRegIdBadge preserveAspectRatio="none" /></Glyph>
      </NavRow>
      <BadgeMain>
        <BadgeCard>
          <BadgeHole />
          <BadgeName>Mr. James Tweedy</BadgeName>
          <BadgeName>WACAC Northwest</BadgeName>
          <QrBox>
            <QrText>QR<br />CODE</QrText>
            <Glyph $w={57} $h={57} $c="#333"><FaQrcode preserveAspectRatio="none" /></Glyph>
          </QrBox>
          <BadgeId>JT_EVT02</BadgeId>
        </BadgeCard>
        <BadgeSide>
          <PlainField $w={513} $h={80} $mt={0} $ml={43}>
            <Legend $ml={17} $fs={20} $lh={22}>Find a Badge</Legend>
            <FindRow>
              <SearchBox $w={223}>
                <Glyph $w={16} $h={18} $c="#222"><FaSearch /></Glyph>
                <SearchText>School Name or Code</SearchText>
              </SearchBox>
              <DateBox $w={66} $ml={11.5}>/  /</DateBox>
              <Glyph $w={33.6} $h={35} $ml={10} $c="#333"><Calendar /></Glyph>
              <Radio />
              <Archived>Archived?</Archived>
            </FindRow>
          </PlainField>
          <Table $w={556} $mt={18} $ml={0} $fs={12.5}>
            <GridRow $cols="105px 149px 78.5px 91.5px 1fr" $pl={8} $h={35} $bg={SKY} $bw={1} $bc="#333" $fs="18px">
              {["Badge ID", "Event Name", "City", "Date", "Archived"].map((t) => (
                <span key={t}>{t}</span>
              ))}
            </GridRow>
            {BADGE_ROWS.map((r) => (
              <GridRow key={r.c[0]} $cols={r.cols} $pl={8} $h={r.h} $bg={r.bg} $bold={r.bold} $bw={1.5} $bc="#333">
                {r.c.map((t, j) => (
                  <span key={j}>{t}</span>
                ))}
              </GridRow>
            ))}
          </Table>
        </BadgeSide>
      </BadgeMain>
    </Body>
  </Browser>
);

export default function App() {
  return (
    <Canvas>
      <Global />
      <Strip $x={2400} $y={56} $w={932} $h={13} />
      <Strip $x={0} $y={641} $w={738} $h={11} />
      <Strip $x={738} $y={1} $w={814} $h={3} />
      <Strip $x={2390} $y={936} $w={930} $h={4} />
      <Home />
      <NewAdmin />
      <StudentLogin />
      <LooseNote>Save time, icons to login into specific</LooseNote>
      <NewStudent />
      <StudentDash />
      <AdminLogin />
      <AdminDash />
      <Badges />
    </Canvas>
  );
}
